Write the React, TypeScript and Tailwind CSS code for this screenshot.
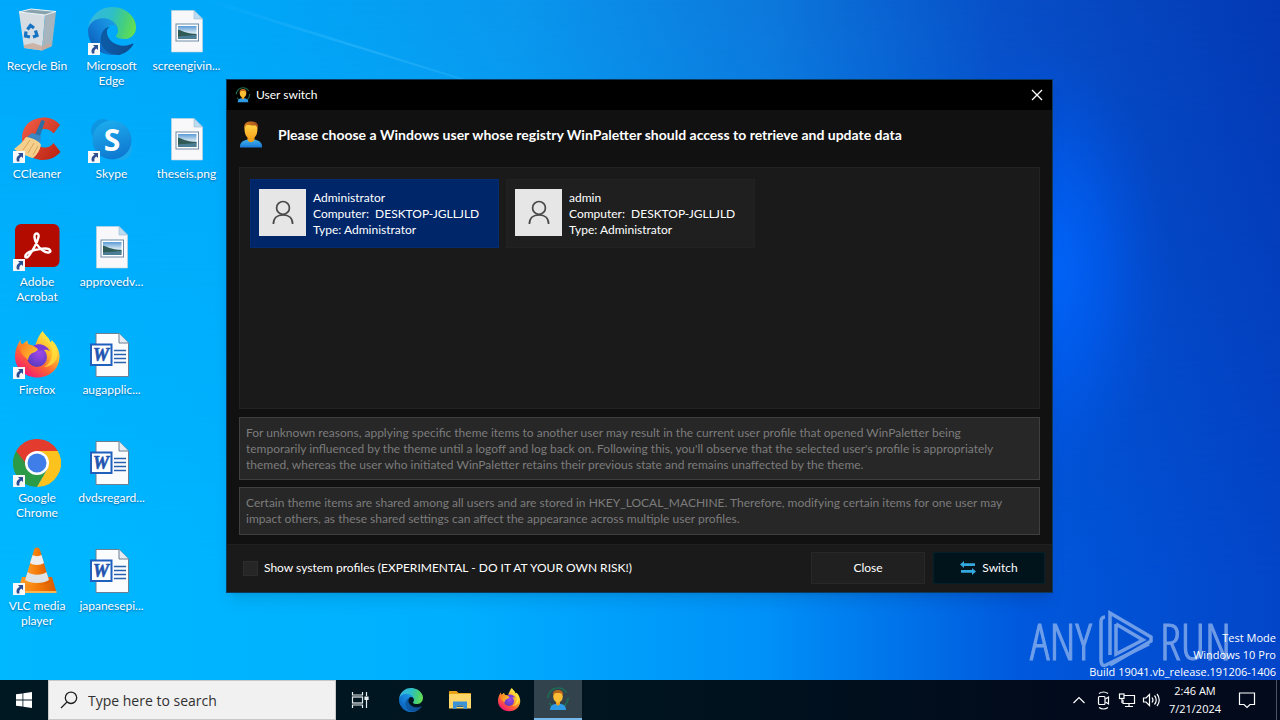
import type { ReactNode } from "react";

interface IconProps {
  className?: string;
}

interface Shortcut {
  label: string[];
  icon: ReactNode;
  linked?: boolean;
}

interface WindowsUser {
  name: string;
  computer: string;
  type: string;
  selected: boolean;
}

function RecycleBinIcon({ className }: IconProps) {
  return (
    <svg viewBox="0 0 48 48" className={className} aria-hidden="true">
      <path d="M6 5 L18 2 L43 4.500 L32 8 Z" fill="#8aa3ae" />
      <path d="M6 5 L32 8 L29 43.500 L11 41 Z" fill="#d5dde2" />
      <path d="M32 8 L43 4.500 L39 39 L29 43.500 Z" fill="#a5b4bd" />
      <path d="M11 38 L20 36 L29 39 L38 36 L38.500 39.500 L29 43.500 L11 41 Z" fill="#c9a99a" opacity=".8" />
      <path d="M6 5 L18 2 L43 4.500 L32 8 Z" fill="none" stroke="#eef5f8" strokeWidth="1" />
      <g fill="none" stroke="#1673c4" strokeWidth="3.200">
        <path d="M14.500 22.500 L17.500 18.500 L21 21" />
        <path d="M22.500 23.500 L24 28.500 L20 30" />
        <path d="M17 30 L12.500 29 L13 24.500" />
      </g>
    </svg>
  );
}

function EdgeIcon({ className }: IconProps) {
  return (
    <svg viewBox="0 0 256 256" className={className} aria-hidden="true">
      <defs>
        <linearGradient id="edge-a" x1="0.250" y1="0.500" x2="1" y2="0.500">
          <stop offset="0" stopColor="#0c59a4" />
          <stop offset="1" stopColor="#114a8b" />
        </linearGradient>
        <linearGradient id="edge-b" x1="0.900" y1="0.200" x2="0.200" y2="0.900">
          <stop offset="0" stopColor="#1b9de2" />
          <stop offset="0.500" stopColor="#1480d8" />
          <stop offset="1" stopColor="#0b5fb8" />
        </linearGradient>
        <linearGradient id="edge-c" x1="0" y1="0.400" x2="1" y2="0.600">
          <stop offset="0" stopColor="#35b7e0" />
          <stop offset="0.450" stopColor="#2dbfc8" />
          <stop offset="0.750" stopColor="#45cf7c" />
          <stop offset="1" stopColor="#66e04f" />
        </linearGradient>
      </defs>
      <path
        fill="url(#edge-a)"
        d="M235.680 195.460a93.730 93.730 0 0 1-10.540 4.710 101.870 101.870 0 0 1-35.900 6.460c-47.320 0-88.540-32.550-88.540-74.320a31.480 31.480 0 0 1 16.430-27.310c-42.800 1.800-53.800 46.400-53.800 72.530 0 73.880 68.090 81.370 82.760 81.370 7.910 0 19.840-2.300 27-4.560l1.310-.440a128.340 128.340 0 0 0 66.600-52.800 4 4 0 0 0-5.320-5.640z"
      />
      <path
        fill="url(#edge-b)"
        d="M105.730 241.420a79.200 79.200 0 0 1-22.740-21.340 80.720 80.720 0 0 1 29.530-120c3.120-1.470 8.450-4.130 15.540-4a32.350 32.350 0 0 1 25.690 13 31.880 31.880 0 0 1 6.360 18.660c0-.210 24.460-79.600-80-79.600-43.900 0-80 41.660-80 78.210a130.150 130.150 0 0 0 12.110 56 128 128 0 0 0 156.380 67.110 75.550 75.550 0 0 1-62.780-8z"
      />
      <path
        fill="url(#edge-c)"
        d="M152.330 148.860c-.810 1.050-3.300 2.500-3.300 5.660 0 2.610 1.700 5.120 4.720 7.230 14.380 10 41.490 8.680 41.560 8.680a59.560 59.560 0 0 0 30.270-8.350 61.380 61.380 0 0 0 30.430-52.880c.260-22.410-8-37.310-11.340-43.910C223.460 23.840 177.720 0 128 0A128 128 0 0 0 0 126.200c.480-36.540 36.800-66.050 80-66.050 3.500 0 23.460.340 42 10.070 16.340 8.580 24.900 18.940 30.850 29.210 6.180 10.670 7.280 24.150 7.280 29.520s-2.740 13.330-7.800 19.910z"
      />
    </svg>
  );
}

function PictureFileIcon({ className }: IconProps) {
  return (
    <svg viewBox="0 0 48 48" className={className} aria-hidden="true">
      <defs>
        <linearGradient id="pic-sky" x1="0" y1="0" x2="0" y2="1">
          <stop offset="0" stopColor="#5a9bd8" />
          <stop offset="0.500" stopColor="#cfe3ee" />
          <stop offset="1" stopColor="#7fa9c4" />
        </linearGradient>
      </defs>
      <path d="M8.500 3.500 H31 L39.500 12 V45 H8.500 Z" fill="#f8f8fa" stroke="#c9d3dc" strokeWidth=".6" />
      <path d="M31 3.500 L39.500 12 H31 Z" fill="#bcdcf2" stroke="#9fb8cc" strokeWidth=".6" />
      <rect x="13" y="17" width="22.500" height="17" fill="#fff" stroke="#6c89a6" strokeWidth="1" />
      <rect x="15" y="19" width="18.500" height="13" fill="url(#pic-sky)" />
      <path d="M15 22.500 C19 23.500 22 26.500 33.500 27 L33.500 28.500 L15 30 Z" fill="#2f5a55" />
      <path d="M15 29.500 L33.500 28 V32 H15 Z" fill="#4b7d94" />
    </svg>
  );
}

function CCleanerIcon({ className }: IconProps) {
  return (
    <svg viewBox="0 0 48 48" className={className} aria-hidden="true">
      <defs>
        <linearGradient id="cc-red" x1="0" y1="0" x2="1" y2="1">
          <stop offset="0" stopColor="#f4604a" />
          <stop offset="1" stopColor="#b8200f" />
        </linearGradient>
      </defs>
      <path
        d="M47 10 C42 4 36 2.300 30 2.600 C17 3.300 9 12 9 23 C9 36 18 45 30 45 C37 45 43 42 47.500 37 L40.500 28 C38 31.500 34 33 31 32.500 C25.500 32 22.500 28 22.500 23 C22.500 18 26 14.500 31 14 C35 13.800 38 15.500 40.500 18.500 Z"
        fill="url(#cc-red)"
      />
      <path d="M28.500 5 L32 6 L26 24 L21 22 Z" fill="#2d6ea5" />
      <path d="M19 18 L28 21 L27 28 L14 22 Z" fill="#3b87c4" />
      <path d="M13 22 C17 22 27 26 28 30 C27 35 24 40 20 43 C15 42 5 37 1 34 C5 31 10 27 13 22 Z" fill="#f5d08d" />
      <path d="M10 35 L17 25 M15 38 L21 28 M20 40 L25 31" stroke="#d8a45c" strokeWidth="1" />
    </svg>
  );
}

function SkypeIcon({ className }: IconProps) {
  return (
    <svg viewBox="0 0 48 48" className={className} aria-hidden="true">
      <defs>
        <linearGradient id="skype" x1="0" y1="0" x2="0.300" y2="1">
          <stop offset="0" stopColor="#1fb1f0" />
          <stop offset="1" stopColor="#0f7bd2" />
        </linearGradient>
      </defs>
      <circle cx="15" cy="16" r="12" fill="#0f96e2" />
      <circle cx="33" cy="34" r="11" fill="#1aa9ee" />
      <circle cx="24" cy="25" r="19.500" fill="url(#skype)" />
      <text x="24" y="36" textAnchor="middle" fill="#fff" className="font-['Open_Sans',sans-serif] text-[30px] font-bold">
        S
      </text>
    </svg>
  );
}

function AcrobatIcon({ className }: IconProps) {
  return (
    <svg viewBox="0 0 48 48" className={className} aria-hidden="true">
      <rect x="2" y="1" width="44.500" height="43" rx="6" fill="#b30b00" />
      <path
        d="M23.500 10.500 C20.500 10.500 21 16.500 24 21.500 C27 26.500 32.500 30 35.500 29.500 C39 29 37.500 25.500 32 25.500 C25.500 25.500 16 28 13 31.500 C11 34.500 13.500 36 16 32.500 C19.500 28 24.500 19 25.500 14 C26 11.500 25 10.500 23.500 10.500 Z"
        fill="none"
        stroke="#fff"
        strokeWidth="2.400"
      />
    </svg>
  );
}

function FirefoxIcon({ className }: IconProps) {
  return (
    <svg viewBox="0 0 48 48" className={className} aria-hidden="true">
      <defs>
        <linearGradient id="fx-body" x1="0.850" y1="0.100" x2="0.250" y2="1">
          <stop offset="0" stopColor="#fff04a" />
          <stop offset="0.350" stopColor="#ffb52b" />
          <stop offset="0.650" stopColor="#ff5f36" />
          <stop offset="1" stopColor="#f0127c" />
        </linearGradient>
        <radialGradient id="fx-globe" cx="0.600" cy="0.300" r="0.700">
          <stop offset="0" stopColor="#a347e8" />
          <stop offset="1" stopColor="#5a3cc0" />
        </radialGradient>
        <linearGradient id="fx-tail" x1="0" y1="0" x2="1" y2="0.500">
          <stop offset="0" stopColor="#ff7a20" />
          <stop offset="1" stopColor="#ffc02e" />
        </linearGradient>
      </defs>
      <path
        d="M29.500 0 C31 3 34 5 36 8 C36.500 9.500 37 10.500 37.500 11.500 C38 10.500 38.500 10 39 9.500 C43 13 46.500 19 46.500 25.500 C46.500 37.500 37 46.500 24.500 46.500 C12 46.500 2 37.500 2 25.500 C2 19 4 14.500 7.500 8.500 C7.500 11 8 12.500 9.500 13.500 C11 11.500 12.500 10.500 14.500 9.500 C14.500 12 15 13.500 17 14.500 L22 15 C24 9 26 4 29.500 0 Z"
        fill="url(#fx-body)"
      />
      <circle cx="24" cy="26" r="10" fill="url(#fx-globe)" />
      <path
        d="M20 15 C25 11.500 33 13 37 20 C34 18.500 33 18.500 31 19 C27 19.500 24 19.500 20 15 Z"
        fill="#7d3bd6"
      />
      <path
        d="M7 14 C13 11 20 14 25 18 C24 21 20 21.500 18.500 22.500 C16 24.500 15.500 26 15 29 C10 24 6 21 7 14 Z"
        fill="url(#fx-tail)"
      />
      <path
        d="M29.500 0 C29 7 36 11 39 18 C40 26 37 33 31 36 C38 36 44 31 44.500 23 C44.500 18 42 13 39 9.500 C38.500 10 38 10.500 37.500 11.500 C36 6 31 4 29.500 0 Z"
        fill="#ffe23d"
        opacity=".75"
      />
    </svg>
  );
}

function ChromeIcon({ className }: IconProps) {
  return (
    <svg viewBox="0 0 48 48" className={className} aria-hidden="true">
      <path d="M24 24 L3.200 12 A24 24 0 0 1 44.800 12 Z" fill="#e33b2e" />
      <path d="M24 24 L3.200 12 A24 24 0 0 0 24 48 L34.400 30 Z" fill="#2c9b48" />
      <path d="M24 12 H44.800 A24 24 0 0 1 24 48 L34.400 30 Z" fill="#fcc31f" />
      <path d="M3.200 12 L13.600 30 L24 12 Z" fill="#e33b2e" />
      <path d="M13.600 30 L3.200 12 L14 26 Z" fill="#2c9b48" />
      <circle cx="24" cy="24" r="12" fill="#fff" />
      <circle cx="24" cy="24" r="9.500" fill="#3f7ee8" />
    </svg>
  );
}

function VlcIcon({ className }: IconProps) {
  return (
    <svg viewBox="0 0 48 48" className={className} aria-hidden="true">
      <defs>
        <linearGradient id="vlc" x1="0" y1="0" x2="1" y2="0">
          <stop offset="0" stopColor="#ffa22e" />
          <stop offset="0.500" stopColor="#f57c0a" />
          <stop offset="1" stopColor="#d85a00" />
        </linearGradient>
      </defs>
      <path d="M9 30 H39 L43.500 45.500 H4.500 Z" fill="url(#vlc)" />
      <path d="M4.500 44 H43.500 V46 H4.500 Z" fill="#ffb54e" />
      <path d="M24 .500 C26 .500 26.500 1.500 27 3 L36.500 35 C33 39.500 15 39.500 11.500 35 L21 3 C21.500 1.500 22 .500 24 .500 Z" fill="url(#vlc)" />
      <path d="M19.600 8 C22 9.500 26 9.500 28.500 8 L31 16 C28 18.500 20 18.500 17 16 Z" fill="#eceef0" />
      <path d="M14.600 25 C19 28.500 29 28.500 33.500 25 L36 33 C31 37 17 37 12.200 33 Z" fill="#dfe2e5" />
    </svg>
  );
}

function WordFileIcon({ className }: IconProps) {
  return (
    <svg viewBox="0 0 48 48" className={className} aria-hidden="true">
      <path d="M8 2.500 H31 L40.500 12 V45.500 H8 Z" fill="#fbfcfd" stroke="#6d7f92" strokeWidth="1" />
      <path d="M31 2.500 V12 H40.500" fill="#e4ebf2" stroke="#6d7f92" strokeWidth="1" />
      <path d="M26 19.500 H38 M26 23.500 H38 M26 27.500 H38 M26 31.500 H38" stroke="#2b5fb0" strokeWidth="1.300" />
      <rect x="3" y="13.500" width="20.500" height="20.500" fill="#fff" stroke="#1f5fbe" strokeWidth="2" />
      <text
        x="13"
        y="30"
        textAnchor="middle"
        fill="#1f55b0"
        stroke="#1f55b0"
        strokeWidth=".6"
        className="font-['Liberation_Serif',serif] text-[18px] font-bold italic"
      >
        W
      </text>
    </svg>
  );
}

function ShortcutArrow({ className }: IconProps) {
  return (
    <svg viewBox="0 0 12 12" className={className} aria-hidden="true">
      <rect width="12" height="12" fill="#f6f8fa" />
      <path d="M5 2 H10 V7 L8.300 5.400 C6.500 6.500 6 8 6.500 10.500 H4 C2.800 7.500 3.800 5 6.600 3.700 Z" fill="#2b4f92" />
    </svg>
  );
}

function PersonIcon({ className }: IconProps) {
  return (
    <svg viewBox="0 0 24 28" className={className} aria-hidden="true">
      <defs>
        <linearGradient id="person-shirt" x1="0" y1="0" x2="0" y2="1">
          <stop offset="0" stopColor="#3fb4ee" />
          <stop offset="1" stopColor="#1a78d8" />
        </linearGradient>
        <linearGradient id="person-face" x1="0" y1="0" x2="0" y2="1">
          <stop offset="0" stopColor="#ffd84a" />
          <stop offset="1" stopColor="#f9a51e" />
        </linearGradient>
        <linearGradient id="person-hair" x1="0" y1="0" x2="1" y2="0">
          <stop offset="0" stopColor="#d8801c" />
          <stop offset="1" stopColor="#a04f1c" />
        </linearGradient>
      </defs>
      <path d="M1 26.500 C.500 21.500 4 19.500 8.500 18.500 H15.500 C20 19.500 23.500 21.500 23 26.500 Z" fill="url(#person-shirt)" />
      <path d="M8.500 15 H15.500 V19 C14 22 10 22 8.500 19 Z" fill="#f0a01c" />
      <path d="M5.500 7.500 C5.500 3.500 8 2 12 2 C16 2 18.500 3.500 18.500 7.500 C18.500 13.500 16.500 17.500 12 17.500 C7.500 17.500 5.500 13.500 5.500 7.500 Z" fill="url(#person-face)" />
      <path d="M5.500 8 C4.500 3 7 .500 12 .500 C14 .500 16.500 .800 17.500 2 C19.500 3.500 19 6.500 18.500 8 C18 6 17.500 4.800 16 4.200 C12 5 9 3.800 7.500 4.200 C6.500 5 6 6.500 5.500 8 Z" fill="url(#person-hair)" />
    </svg>
  );
}

function UserSwitchIcon({ className }: IconProps) {
  return (
    <svg viewBox="0 0 24 24" className={className} aria-hidden="true">
      <circle cx="12" cy="11" r="10" fill="none" stroke="#1d6b52" strokeWidth="1.600" strokeDasharray="26 5" />
      <path d="M4 23 C4 18.500 7 17 10 17 H14 C17 17 20 18.500 20 23 Z" fill="#2f9be6" />
      <path d="M10 13 H14 V17 C13 19 11 19 10 17 Z" fill="#eda01f" />
      <ellipse cx="12" cy="9.500" rx="4.800" ry="6" fill="#fbbd33" />
      <path d="M7 9 C6.500 5 8 3 12 3 C16 3 17.500 5 17 9 C16 6.500 15 6 12 6 C9 6 8 6.500 7 9 Z" fill="#b8671d" />
    </svg>
  );
}

function ExplorerIcon({ className }: IconProps) {
  return (
    <svg viewBox="0 0 24 24" className={className} aria-hidden="true">
      <path d="M1 4 C1 3.400 1.400 3 2 3 H8.500 L10.500 5 H22 C22.600 5 23 5.400 23 6 V10 H1 Z" fill="#e8a317" />
      <path d="M1 6 H23 V20.500 H1 Z" fill="#ffd667" />
      <path d="M5 13.500 H19 V21 H15.500 V17.500 H8.500 V21 H5 Z" fill="#3b92d6" />
      <path d="M8.500 17.500 H15.500 V19 H8.500 Z" fill="#2568a5" />
    </svg>
  );
}

const shortcuts: Shortcut[] = [
  { label: ["Recycle Bin"], icon: <RecycleBinIcon className="size-12" /> },
  { label: ["CCleaner"], icon: <CCleanerIcon className="size-12" />, linked: true },
  { label: ["Adobe", "Acrobat"], icon: <AcrobatIcon className="size-12" />, linked: true },
  { label: ["Firefox"], icon: <FirefoxIcon className="size-12" />, linked: true },
  { label: ["Google", "Chrome"], icon: <ChromeIcon className="size-12" />, linked: true },
  { label: ["VLC media", "player"], icon: <VlcIcon className="size-12" />, linked: true },
  { label: ["Microsoft", "Edge"], icon: <EdgeIcon className="size-12" />, linked: true },
  { label: ["Skype"], icon: <SkypeIcon className="size-12" />, linked: true },
  { label: ["approvedv..."], icon: <PictureFileIcon className="size-12" /> },
  { label: ["augapplic..."], icon: <WordFileIcon className="size-12" /> },
  { label: ["dvdsregard..."], icon: <WordFileIcon className="size-12" /> },
  { label: ["japanesepi..."], icon: <WordFileIcon className="size-12" /> },
  { label: ["screengivin..."], icon: <PictureFileIcon className="size-12" /> },
  { label: ["theseis.png"], icon: <PictureFileIcon className="size-12" /> },
];

const users: WindowsUser[] = [
  { name: "Administrator", computer: "DESKTOP-JGLLJLD", type: "Administrator", selected: true },
  { name: "admin", computer: "DESKTOP-JGLLJLD", type: "Administrator", selected: false },
];

function Wallpaper() {
  return (
    <svg viewBox="0 0 1280 680" preserveAspectRatio="none" className="absolute inset-0 size-full" aria-hidden="true">
      <defs>
        <linearGradient id="wall-base" x1="0" y1="0" x2="1" y2="0">
          <stop offset="0" stopColor="#00a9fb" />
          <stop offset="0.180" stopColor="#00a8fa" />
          <stop offset="0.400" stopColor="#0a98ee" />
          <stop offset="0.600" stopColor="#0d78dc" />
          <stop offset="0.780" stopColor="#0850c8" />
          <stop offset="1" stopColor="#0439b4" />
        </linearGradient>
        <linearGradient id="wall-low" x1="0" y1="0" x2="1" y2="0">
          <stop offset="0" stopColor="#00b8ff" />
          <stop offset="0.350" stopColor="#00b0ff" />
          <stop offset="0.600" stopColor="#0090f8" />
          <stop offset="0.800" stopColor="#0058dc" />
          <stop offset="1" stopColor="#0345c8" />
        </linearGradient>
        <linearGradient id="wall-fade" x1="0" y1="0" x2="0" y2="1">
          <stop offset="0" stopColor="#000" />
          <stop offset="0.850" stopColor="#fff" />
        </linearGradient>
        <mask id="wall-mask">
          <rect width="1280" height="680" fill="url(#wall-fade)" />
        </mask>
        <radialGradient id="wall-glow">
          <stop offset="0" stopColor="#0068ff" />
          <stop offset="0.500" stopColor="#005ef5" stopOpacity="0.600" />
          <stop offset="1" stopColor="#0050e0" stopOpacity="0" />
        </radialGradient>
        <linearGradient id="wall-beam" x1="0" y1="0" x2="1" y2="0">
          <stop offset="0" stopColor="#4cc4ff" stopOpacity="0" />
          <stop offset="0.600" stopColor="#4cc4ff" stopOpacity="0.350" />
          <stop offset="1" stopColor="#4cc4ff" stopOpacity="0.200" />
        </linearGradient>
      </defs>
      <rect width="1280" height="680" fill="url(#wall-base)" />
      <rect width="1280" height="680" fill="url(#wall-low)" mask="url(#wall-mask)" />
      <ellipse cx="1040" cy="270" rx="130" ry="230" fill="url(#wall-glow)" />
      <path d="M200 0 L462 80 H468 L212 0 Z" fill="url(#wall-beam)" />
    </svg>
  );
}

function DesktopShortcut({ label, icon, linked }: Shortcut) {
  return (
    <button type="button" className="flex flex-col items-center pt-[7px] text-center text-white">
      <span className="relative">
        {icon}
        {linked && <ShortcutArrow className="absolute bottom-0 left-0 size-3" />}
      </span>
      <span className="mt-[3px] text-[12px] leading-[15px] whitespace-nowrap [text-shadow:0_1px_2px_rgb(0_50_100/0.6)]">
        {label.map((line) => (
          <span key={line} className="block">
            {line}
          </span>
        ))}
      </span>
    </button>
  );
}

function UserCard({ name, computer, type, selected }: WindowsUser) {
  return (
    <button
      type="button"
      aria-pressed={selected}
      className={
        selected
          ? "flex w-[249px] items-start gap-[7px] border border-[#052c72] bg-[#00266a] px-2 py-[9px] text-left"
          : "flex w-[249px] items-start gap-[7px] border border-[#222222] bg-[#1f1f1f] px-2 py-[9px] text-left"
      }
    >
      <span className="flex size-[47px] shrink-0 items-center justify-center bg-[#e6e6e6]">
        <svg viewBox="0 0 24 26" className="h-[25px] w-[22px]" fill="none" stroke="#4a4a4a" strokeWidth="1.900" aria-hidden="true">
          <circle cx="12" cy="8" r="7" />
          <path d="M1.500 25.500 C1.500 19 6 15.500 12 15.500 C18 15.500 22.500 19 22.500 25.500" />
        </svg>
      </span>
      <span className="pt-px whitespace-pre">
        <span className="block">{name}</span>
        <span className="block">{`Computer:  ${computer}`}</span>
        <span className="block">Type: {type}</span>
      </span>
    </button>
  );
}

function UserSwitchDialog() {
  return (
    <section
      role="dialog"
      aria-labelledby="dialog-title"
      className="absolute top-[79px] left-[226px] flex w-[827px] flex-col border border-[#0d3a5c] bg-[#111111] text-[12px] leading-4 whitespace-nowrap text-white shadow-lg"
    >
      <header className="flex h-[30px] items-center bg-black pl-2">
        <UserSwitchIcon className="size-4" />
        <span id="dialog-title" className="ml-[5px]">
          User switch
        </span>
        <button type="button" aria-label="Close window" className="ml-auto flex h-full w-[30px] items-center justify-center">
          <svg viewBox="0 0 12 12" className="size-3" stroke="#fff" strokeWidth="1.300" aria-hidden="true">
            <path d="M1 1 L11 11 M11 1 L1 11" />
          </svg>
        </button>
      </header>

      <div className="flex flex-col px-3">
        <div className="flex h-[57px] items-center gap-[15px] pb-2">
          <PersonIcon className="h-7 w-6" />
          <h1 className="text-[14px] font-bold">
            Please choose a Windows user whose registry WinPaletter should access to retrieve and update data
          </h1>
        </div>
        <div className="flex h-[242px] items-start gap-[7px] border border-[#232323] bg-[#1a1a1a] px-[10px] py-[11px]">
          {users.map((user) => (
            <UserCard key={user.name} {...user} />
          ))}
        </div>
        <p className="mt-2 border border-[#3f3f3f] bg-[#272727] px-[6px] pt-[7px] pb-[6px] text-[#7c7c7c]">
          For unknown reasons, applying specific theme items to another user may result in the current user profile that
          opened WinPaletter being
          <br />
          temporarily influenced by the theme until a logoff and log back on. Following this, you'll observe that the
          selected user's profile is appropriately
          <br />
          themed, whereas the user who initiated WinPaletter retains their previous state and remains unaffected by the
          theme.
        </p>
        <p className="mt-[7px] mb-[9px] border border-[#3f3f3f] bg-[#272727] px-[6px] py-[7px] text-[#7c7c7c]">
          Certain theme items are shared among all users and are stored in HKEY_LOCAL_MACHINE. Therefore, modifying
          certain items for one user may
          <br />
          impact others, as these shared settings can affect the appearance across multiple user profiles.
        </p>
      </div>

      <footer className="flex h-12 items-start border-t border-[#202020] bg-[#1a1a1a] pt-[7px] pr-[7px] pl-4">
        <label className="flex h-8 items-center gap-[6px]">
          <input type="checkbox" className="size-[15px] appearance-none border border-[#2c2c2c] bg-[#262626]" />
          Show system profiles (EXPERIMENTAL - DO IT AT YOUR OWN RISK!)
        </label>
        <button type="button" className="ml-auto h-8 w-[114px] border border-[#282828] bg-[#202020]">
          Close
        </button>
        <button
          type="button"
          className="ml-2 flex h-8 w-[112px] items-center justify-center gap-[6px] border border-[#04202b] bg-[#01141b]"
        >
          <svg viewBox="0 0 16 14" className="h-[14px] w-4" fill="#35a8e0" aria-hidden="true">
            <path d="M0 3.500 L4 0 V2.200 H15 V5 H4 V7 Z" />
            <path d="M16 10.500 L12 7 V9 H1 V11.800 H12 V14 Z" />
          </svg>
          Switch
        </button>
      </footer>
    </section>
  );
}

function Watermark() {
  return (
    <div className="absolute right-[49px] bottom-2 flex items-center gap-[7px] font-['Open_Sans_Condensed_Light','Open_Sans_Condensed','Roboto_Condensed','Liberation_Sans_Narrow',sans-serif] text-[49px] leading-none font-light text-[#9dbdf0] opacity-70 [-webkit-text-stroke:1px_#9dbdf0]">
      <span>ANY</span>
      <svg viewBox="0 0 54 62" className="h-[62px] w-[54px]" fill="none" stroke="currentColor" strokeWidth="3.500" aria-hidden="true">
        <path d="M6 7 C3 7 2 9 2 12 V50 C2 55 4 57 9 54 L50 34" />
        <path d="M11 45 V3 L52 27 V31 L11 55" />
        <path d="M17 14 V44 L44 30 L17 14" />
      </svg>
      <span>RUN</span>
    </div>
  );
}

function Taskbar() {
  return (
    <footer className="flex h-10 shrink-0 items-stretch bg-[linear-gradient(90deg,#001822,#00141f_50%,#020a1c_85%)] text-white">
      <button type="button" aria-label="Start" className="flex w-12 items-center justify-center">
        <svg viewBox="0 0 16 16" className="size-4" fill="#fff" aria-hidden="true">
          <path d="M0 2.300 L6.500 1.400 V7.600 H0 Z M7.300 1.300 L16 0 V7.600 H7.300 Z M0 8.400 H6.500 V14.600 L0 13.700 Z M7.300 8.400 H16 V16 L7.300 14.700 Z" />
        </svg>
      </button>
      <label className="flex w-72 items-center border border-[#c8c8c8] bg-[#f1f1f1] pl-[11px]">
        <svg viewBox="0 0 18 18" className="size-[18px] shrink-0" fill="none" stroke="#1f1f1f" strokeWidth="1.300" aria-hidden="true">
          <circle cx="11" cy="6.800" r="5.700" />
          <path d="M7 11 L1 17" />
        </svg>
        <input
          type="text"
          aria-label="Search"
          placeholder="Type here to search"
          className="ml-[10px] min-w-0 flex-1 bg-transparent font-['Open_Sans',sans-serif] text-[14px] text-black outline-none placeholder:text-[#303030]"
        />
      </label>
      <button type="button" aria-label="Task View" className="mr-[3px] flex w-12 items-center justify-center">
        <svg viewBox="0 0 18 16" className="h-4 w-[18px]" fill="none" stroke="#e8edf0" strokeWidth="1.200" aria-hidden="true">
          <path d="M1.500 0 V3 H11.500 V0 M1.500 16 V13 H11.500 V16" />
          <rect x="1.500" y="5" width="10" height="6" />
          <path d="M15.500 0 V4 M15.500 8 V16" />
          <path d="M14 5 H17 V7.500 H14 Z" fill="#e8edf0" />
        </svg>
      </button>
      <nav aria-label="Pinned apps" className="flex gap-px">
        <button type="button" aria-label="Microsoft Edge" className="flex w-12 items-center justify-center">
          <EdgeIcon className="size-6" />
        </button>
        <button type="button" aria-label="File Explorer" className="flex w-12 items-center justify-center">
          <ExplorerIcon className="size-6" />
        </button>
        <button type="button" aria-label="Firefox" className="flex w-12 items-center justify-center">
          <FirefoxIcon className="size-6" />
        </button>
        <button
          type="button"
          aria-label="WinPaletter"
          className="flex w-12 items-center justify-center border-b-2 border-[#76b9ed] bg-[#33434d]"
        >
          <UserSwitchIcon className="size-6" />
        </button>
      </nav>
      <div className="ml-auto flex items-center">
        <svg viewBox="0 0 90 20" className="h-5 w-[90px]" fill="none" stroke="#fff" strokeWidth="1.200" aria-hidden="true">
          <path d="M1.500 13 L7 7.500 L12.500 13" />
          <rect x="26.500" y="6.500" width="6.500" height="8" rx="1" />
          <path d="M33.500 9 L36.500 7 V14 L33.500 12 M27 3.500 C30 1.500 33 1.500 36 3.500 M27 17.500 C30 19.500 33 19.500 36 17.500" />
          <path d="M52 5.500 H62.500 V13.500 H51 V10 M57 13.500 V16.500 M53 16.500 H61" />
          <rect x="47.500" y="4" width="4.500" height="4.500" />
          <path d="M50 8.500 V13" />
          <path d="M71.500 8 H74 L77.500 4.500 V15.500 L74 12 H71.500 Z M80 7.500 C81.200 9 81.200 11 80 12.500 M82.500 5.500 C84.800 8 84.800 12 82.500 14.500 M85 4 C88 7.500 88 12.500 85 16" />
        </svg>
        <time className="ml-[6px] w-[54px] text-center font-['Open_Sans',sans-serif] text-[11px] leading-[18px]">
          2:46 AM
          <br />
          7/21/2024
        </time>
        <button type="button" aria-label="Notifications" className="flex w-[54px] items-center justify-center pr-1">
          <svg viewBox="0 0 18 18" className="size-[18px]" fill="none" stroke="#fff" strokeWidth="1.200" aria-hidden="true">
            <path d="M1.500 2 H16.500 V13.500 H12 L9 16.500 L6 13.500 H1.500 Z" />
          </svg>
        </button>
        <span className="h-10 w-1 border-l border-[#4a5368]" />
      </div>
    </footer>
  );
}

export default function App() {
  return (
    <div className="flex h-screen flex-col overflow-hidden font-['Lato',sans-serif]">
      <main className="relative min-h-0 flex-1 overflow-hidden bg-[#00a8fa]">
        <Wallpaper />
        <div className="relative grid w-fit grid-flow-col grid-cols-[74px_75px_75px] grid-rows-[repeat(6,108px)]">
          {shortcuts.map((shortcut) => (
            <DesktopShortcut key={shortcut.label.join(" ")} {...shortcut} />
          ))}
        </div>
        <UserSwitchDialog />
        <Watermark />
        <div className="absolute right-1 bottom-0 text-right font-['Open_Sans',sans-serif] text-[11px] leading-[17px] text-white">
          <p>Test Mode</p>
          <p>Windows 10 Pro</p>
          <p>Build 19041.vb_release.191206-1406</p>
        </div>
      </main>
      <Taskbar />
    </div>
  );
}
